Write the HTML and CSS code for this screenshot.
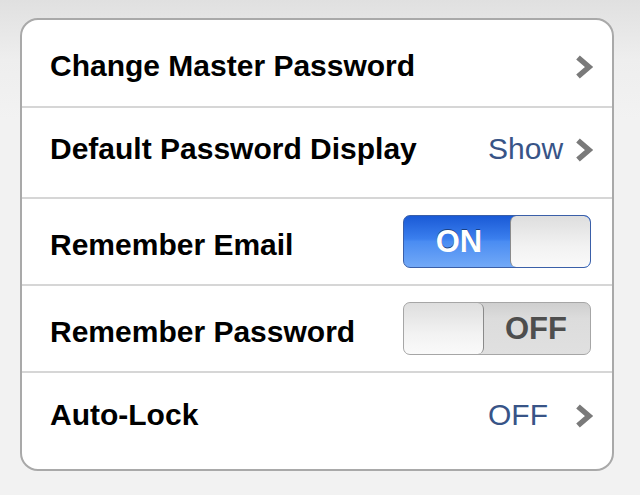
FILE: index.html
```html
<!DOCTYPE html>
<html>
<head>
<meta charset="utf-8">
<link rel="stylesheet" href="styles.css">
</head>
<body>
<div class="card">
  <div class="row r1">
    <span class="label">Change Master Password</span>
    <span class="right"><svg class="chev" viewBox="0 0 20 26" width="20" height="26"><path d="M4 3.5 L15 13 L4 22.5" fill="none" stroke="#7a7a7a" stroke-width="5.5"/></svg></span>
  </div>
  <div class="row r2">
    <span class="label">Default Password Display</span>
    <span class="right"><span class="value">Show</span><svg class="chev" viewBox="0 0 20 26" width="20" height="26"><path d="M4 3.5 L15 13 L4 22.5" fill="none" stroke="#7a7a7a" stroke-width="5.5"/></svg></span>
  </div>
  <div class="row r3">
    <span class="label">Remember Email</span>
    <div class="toggle on"><span class="ttext">ON</span><span class="knob"></span></div>
  </div>
  <div class="row r4">
    <span class="label">Remember Password</span>
    <div class="toggle off"><span class="knob"></span><span class="ttext">OFF</span></div>
  </div>
  <div class="row r5">
    <span class="label">Auto-Lock</span>
    <span class="right"><span class="value">OFF</span><svg class="chev" viewBox="0 0 20 26" width="20" height="26"><path d="M4 3.5 L15 13 L4 22.5" fill="none" stroke="#7a7a7a" stroke-width="5.5"/></svg></span>
  </div>
</div>
</body>
</html>
```
FILE: styles.css
```css
html, body {
  margin: 0;
  padding: 0;
}
body {
  width: 640px;
  height: 495px;
  background: linear-gradient(to bottom, #e0e0e0 0px, #eeeeee 60px, #f2f2f2 120px, #f2f2f2 100%);
  font-family: "Liberation Sans", Arial, sans-serif;
  padding-top: 18px;
  box-sizing: border-box;
  overflow: hidden;
}
.card {
  margin-left: 20px;
  width: 594px;
  box-sizing: border-box;
  border: 2px solid #a9a9a9;
  border-radius: 18px;
  background: #fff;
  overflow: hidden;
}
.row {
  display: flex;
  align-items: center;
  justify-content: space-between;
  padding: 0 18px 0 28px;
  border-bottom: 2px solid #d6d6d6;
  box-sizing: border-box;
}
.row:last-child {
  border-bottom: none;
}
.r1 { height: 88px; padding-top: 5px; }
.r2 { height: 91px; padding-bottom: 8px; }
.r3 { height: 87px; }
.r4 { height: 87px; }
.r5 { height: 96px; padding-bottom: 12px; }
.r3 .label, .r4 .label { padding-top: 6px; }
.label {
  font-weight: bold;
  font-size: 30px;
  color: #000;
}
.right {
  display: flex;
  align-items: center;
}
.value {
  font-size: 30px;
  color: #385487;
  width: 86px;
  text-align: left;
}
.chev {
  display: block;
  margin-top: 2px;
}
.toggle {
  width: 188px;
  height: 53px;
  box-sizing: border-box;
  border-radius: 7px;
  display: flex;
  overflow: hidden;
  margin-right: 3px;
}
.toggle.on {
  border: 1px solid #3a5fa8;
  background: linear-gradient(to bottom, #1a5ad6 0%, #3b7fee 45%, #4a8cf2 50%, #72a9f7 100%);
}
.toggle.off {
  border: 1px solid #a6a6a6;
  background: linear-gradient(to bottom, #cfcfcf 0%, #dcdcdc 30%, #e0e0e0 100%);
}
.ttext {
  flex: 1;
  display: flex;
  align-items: center;
  justify-content: center;
  font-weight: bold;
  font-size: 31px;
}
.on .ttext {
  color: #fff;
  text-shadow: 0 -1px 0 #1b3f80;
  padding-left: 4px;
}
.off .ttext {
  color: #4e4e4e;
  padding-right: 2px;
}
.knob {
  width: 80px;
  height: 100%;
  box-sizing: border-box;
  background: linear-gradient(to bottom, #dedede 0%, #f2f2f2 60%, #fafafa 100%);
  border-radius: 6px;
}
.on .knob {
  border-left: 1px solid #8a8a8a;
}
.off .knob {
  border-right: 1px solid #8a8a8a;
}
```
